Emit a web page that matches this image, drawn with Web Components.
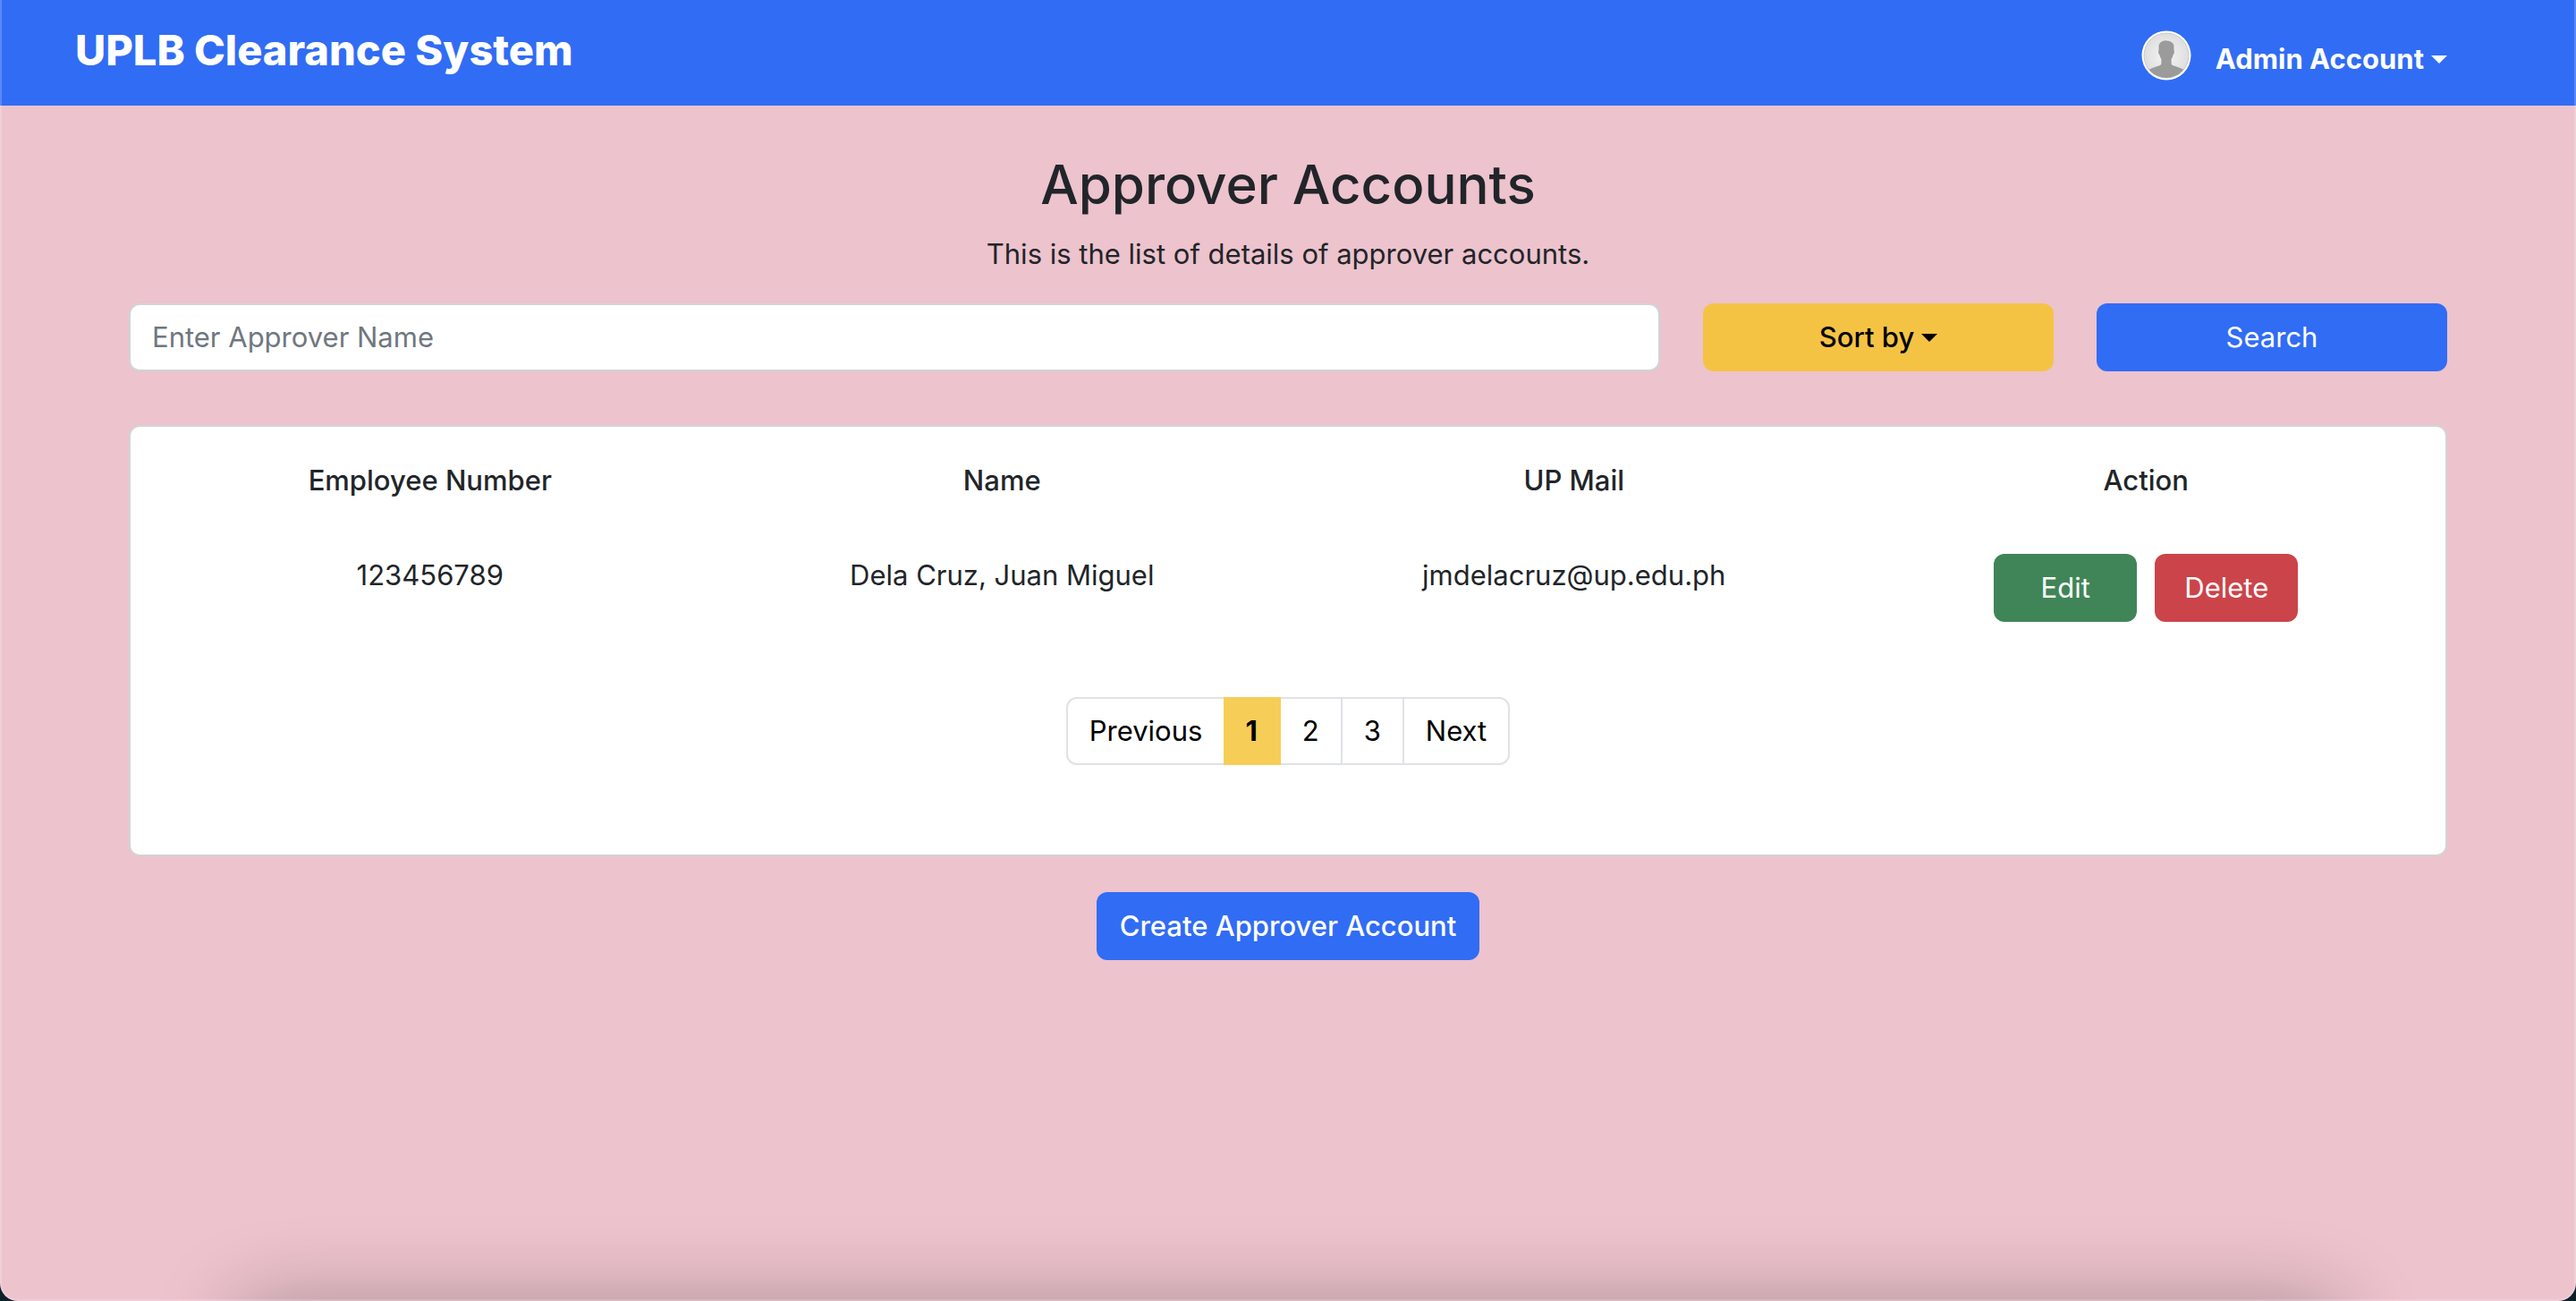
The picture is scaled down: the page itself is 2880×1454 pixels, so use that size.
<!DOCTYPE html>
<html lang="en">
<head>
<meta charset="utf-8">
<meta name="viewport" content="width=device-width, initial-scale=1">
<title>UPLB Clearance System</title>
<style>
  html { background: #0d2029; }
  body {
    margin: 0;
    font-family: Inter, "Liberation Sans", sans-serif;
    font-size: 31px;
    line-height: 48px;
    color: #212529;
  }
</style>
</head>
<body>
<approver-page></approver-page>

<script>
const define = (name, html) => {
  const template = document.createElement("template");
  template.innerHTML = html;
  customElements.define(name, class extends HTMLElement {
    constructor() {
      super();
      this.attachShadow({ mode: "open" }).append(template.content.cloneNode(true));
    }
  });
};

define("caret-icon", `
  <style>
    :host { display: inline-block; vertical-align: middle; margin-left: 8px; margin-bottom: 4px; line-height: 0; }
    svg { width: 18px; height: 9px; display: block; }
  </style>
  <svg viewBox="0 0 18 9" aria-hidden="true"><path d="M0 0h18L9 9z" fill="currentColor"/></svg>
`);

define("user-avatar", `
  <style>
    :host { display: block; flex: none; }
    svg { display: block; width: 56px; height: 56px; }
  </style>
  <svg viewBox="0 0 56 56" role="img" aria-label="Profile picture">
    <defs>
      <radialGradient id="g"><stop offset="0" stop-color="#f6f6f6"/><stop offset="1" stop-color="#dedede"/></radialGradient>
      <clipPath id="c"><circle cx="28" cy="28" r="25"/></clipPath>
    </defs>
    <circle cx="28" cy="28" r="27.5" fill="#fff"/>
    <circle cx="28" cy="28" r="25" fill="url(#g)" stroke="#cfc6c6" stroke-width="1"/>
    <path clip-path="url(#c)" fill="#9b9b9b" d="M28 11.500c3.600 0 6.500 1.500 7.800 3.600.8 1.500.8 4.300.6 7.200 1 .4.600 3.700-.8 4.900-.3 1.900-1 3.400-2 4.700v5.200c0 1.700 1.800 2.400 5 3.200 4.200 1.100 7.400 2.700 9.400 4.300V56H8V44.600c2-1.600 5.200-3.200 9.400-4.300 3.200-.8 5-1.500 5-3.200v-5.200c-1-1.300-1.700-2.800-2-4.700-1.400-1.200-1.800-4.500-.8-4.900-.2-2.900-.2-5.700.6-7.200 1.300-2.100 4.200-3.800 7.800-3.800z"/>
  </svg>
`);

define("app-header", `
  <style>
    :host { display: block; background: #316cf4; color: #fff; }
    header { display: flex; align-items: flex-start; justify-content: space-between; padding: 26px 144px 28px 84px; }
    a, button { font: inherit; color: inherit; text-decoration: none; }
    .brand { font-size: 47px; line-height: 60px; font-weight: 800; }
    .account { display: flex; align-items: flex-end; gap: 27px; padding-top: 8px; }
    button { border: 0; padding: 0; background: none; font-weight: 700; white-space: nowrap; }
  </style>
  <header>
    <a class="brand" href="#"><slot name="brand"></slot></a>
    <div class="account">
      <user-avatar></user-avatar>
      <button type="button" aria-haspopup="menu" aria-expanded="false"><slot name="user"></slot><caret-icon></caret-icon></button>
    </div>
  </header>
`);

define("app-button", `
  <style>
    :host { display: block; --fill: #316cf4; --ink: #fff; }
    :host([variant="warning"]) { --fill: #f5c344; --ink: #000; }
    :host([variant="success"]) { --fill: #408558; }
    :host([variant="danger"]) { --fill: #cb444a; }
    :host([strong]) button { font-weight: 500; }
    button {
      display: block; box-sizing: border-box; width: 100%; margin: 0; padding: 14px 26px;
      border: 0; border-radius: 12px; background: var(--fill); color: var(--ink);
      font: inherit; text-align: center; white-space: nowrap;
    }
    :host([compact]) button { padding: 14px 0; }
  </style>
  <button type="button"><slot></slot></button>
`);

define("search-bar", `
  <style>
    :host { display: block; }
    form { display: flex; gap: 48px; align-items: stretch; }
    label { flex: 1; display: flex; }
    input {
      box-sizing: border-box; width: 100%; min-width: 0; margin: 0; padding: 12px 24px;
      border: 2px solid #cfd4d8; border-radius: 12px; background: #fff; color: inherit; font: inherit;
    }
    input::placeholder { color: #6f777f; opacity: 1; }
    app-button { flex: 0 0 392px; }
  </style>
  <form>
    <label><input type="text" aria-label="Approver name" placeholder="Enter Approver Name"></label>
    <app-button strong variant="warning">Sort by<caret-icon></caret-icon></app-button>
    <app-button>Search</app-button>
  </form>
`);

define("content-card", `
  <style>
    :host {
      display: block; padding: 16px 15px 100px; background: #fff;
      border: 2px solid #d2d4d5; border-radius: 12px;
    }
  </style>
  <slot></slot>
`);

define("approver-table", `
  <style>
    :host { display: block; }
    table { width: 100%; table-layout: fixed; border-collapse: collapse; text-align: center; }
    th { padding: 20px 0; font-weight: 500; }
    td { padding: 38px 0 0; vertical-align: top; }
    .actions { display: flex; justify-content: center; gap: 20px; }
    app-button { width: 160px; }
  </style>
  <table>
    <thead>
      <tr><th scope="col">Employee Number</th><th scope="col">Name</th><th scope="col">UP Mail</th><th scope="col">Action</th></tr>
    </thead>
    <tbody>
      <tr>
        <td>123456789</td><td>Dela Cruz, Juan Miguel</td><td>jmdelacruz@up.edu.ph</td>
        <td><div class="actions">
          <app-button compact variant="success">Edit</app-button>
          <app-button compact variant="danger">Delete</app-button>
        </div></td>
      </tr>
    </tbody>
  </table>
`);

define("page-nav", `
  <style>
    :host { display: block; }
    ul { display: flex; justify-content: center; margin: 0; padding: 0; list-style: none; }
    a {
      display: block; padding: 12px 24px; border: 2px solid #dfe2e7; border-left-width: 0;
      background: #fff; color: #000; text-decoration: none;
    }
    li:first-child a { border-left-width: 2px; border-right-width: 0; border-radius: 12px 0 0 12px; }
    li:last-child a { border-radius: 0 12px 12px 0; }
    a[aria-current] { background: #f6ce57; border-color: #f6ce57; font-weight: 700; }
  </style>
  <nav aria-label="Pages">
    <ul>
      <li><a href="#">Previous</a></li>
      <li><a href="#" aria-current="page">1</a></li>
      <li><a href="#">2</a></li>
      <li><a href="#">3</a></li>
      <li><a href="#">Next</a></li>
    </ul>
  </nav>
`);

define("approver-page", `
  <style>
    :host {
      display: block; position: relative; box-sizing: border-box; min-height: 100vh; overflow: hidden;
      background: #edc3cd; border-radius: 0 0 20px 20px;
    }
    /* Thin light rim of the window and the soft shade along its foot */
    :host::before {
      content: ""; position: absolute; inset: 0; z-index: 2; pointer-events: none;
      border: 2px solid rgba(255, 255, 255, .2); border-top: 0; border-radius: 0 0 20px 20px;
    }
    :host::after {
      content: ""; position: absolute; left: 9%; right: 9%; top: 100%; height: 100px; pointer-events: none;
      border-radius: 40px; box-shadow: 0 0 90px rgba(0, 0, 0, .28);
    }
    main { padding: 48px 144px 0; }
    h1 { margin: 0; font-size: 60px; line-height: 80px; font-weight: 500; text-align: center; }
    p { margin: 14px 0 31px; text-align: center; }
    content-card { margin: 60px 0 40px; }
    page-nav { margin-top: 84px; }
    .create { display: flex; justify-content: center; }
  </style>
  <app-header><span slot="brand">UPLB Clearance System</span><span slot="user">Admin Account</span></app-header>
  <main>
    <h1>Approver Accounts</h1>
    <p>This is the list of details of approver accounts.</p>
    <search-bar></search-bar>
    <content-card>
      <approver-table></approver-table>
      <page-nav></page-nav>
    </content-card>
    <div class="create"><app-button strong>Create Approver Account</app-button></div>
  </main>
`);
</script>
</body>
</html>
